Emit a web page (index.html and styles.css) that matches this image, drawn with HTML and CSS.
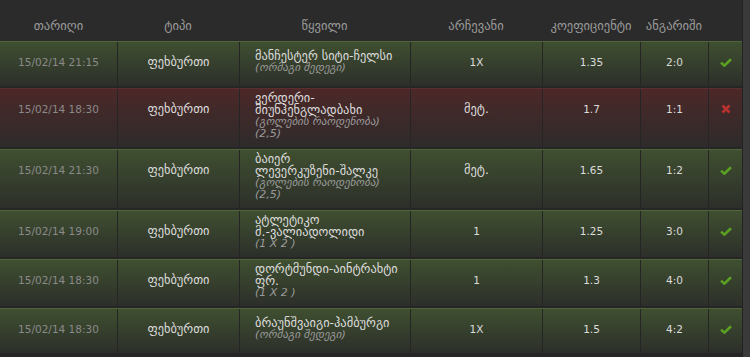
FILE: index.html
```html
<!DOCTYPE html>
<html lang="ka">
<head>
<meta charset="utf-8">
<title>ფსონები</title>
<link rel="stylesheet" href="styles.css">
</head>
<body>
<div class="page">
  <div class="table">
    <div class="row head">
      <div class="cell ka">თარიღი</div>
      <div class="cell ka">ტიპი</div>
      <div class="cell ka">წყვილი</div>
      <div class="cell ka">არჩევანი</div>
      <div class="cell ka">კოეფიციენტი</div>
      <div class="cell ka">ანგარიში</div>
      <div class="cell"></div>
    </div>

    <div class="row win">
      <div class="cell date">15/02/14 21:15</div>
      <div class="cell ka">ფეხბურთი</div>
      <div class="cell pair"><span class="ka">მანჩესტერ სიტი-ჩელსი</span><em>(ორმაგი შედეგი)</em></div>
      <div class="cell">1X</div>
      <div class="cell">1.35</div>
      <div class="cell">2:0</div>
      <div class="cell icon"><svg class="check" viewBox="0 0 12 9" width="12" height="9"><path d="M1 4.6 L4.4 7.6 L11 1.2"/></svg></div>
    </div>

    <div class="row lose">
      <div class="cell date">15/02/14 18:30</div>
      <div class="cell ka">ფეხბურთი</div>
      <div class="cell pair"><span class="ka">ვერდერი-<br>მიუნჰენგლადბახი</span><em>(გოლების რაოდენობა)<br>(2,5)</em></div>
      <div class="cell ka">მეტ.</div>
      <div class="cell">1.7</div>
      <div class="cell">1:1</div>
      <div class="cell icon"><svg class="cross" viewBox="0 0 10 10" width="10" height="10"><path d="M1.5 1.5 L8.5 8.5 M8.5 1.5 L1.5 8.5"/></svg></div>
    </div>

    <div class="row win">
      <div class="cell date">15/02/14 21:30</div>
      <div class="cell ka">ფეხბურთი</div>
      <div class="cell pair"><span class="ka">ბაიერ<br>ლევერკუზენი-შალკე</span><em>(გოლების რაოდენობა)<br>(2,5)</em></div>
      <div class="cell ka">მეტ.</div>
      <div class="cell">1.65</div>
      <div class="cell">1:2</div>
      <div class="cell icon"><svg class="check" viewBox="0 0 12 9" width="12" height="9"><path d="M1 4.6 L4.4 7.6 L11 1.2"/></svg></div>
    </div>

    <div class="row win">
      <div class="cell date">15/02/14 19:00</div>
      <div class="cell ka">ფეხბურთი</div>
      <div class="cell pair"><span class="ka">ატლეტიკო<br>მ.-ვალიადოლიდი</span><em>(1 X 2 )</em></div>
      <div class="cell">1</div>
      <div class="cell">1.25</div>
      <div class="cell">3:0</div>
      <div class="cell icon"><svg class="check" viewBox="0 0 12 9" width="12" height="9"><path d="M1 4.6 L4.4 7.6 L11 1.2"/></svg></div>
    </div>

    <div class="row win">
      <div class="cell date">15/02/14 18:30</div>
      <div class="cell ka">ფეხბურთი</div>
      <div class="cell pair"><span class="ka">დორტმუნდი-აინტრახტი<br>ფრ.</span><em>(1 X 2 )</em></div>
      <div class="cell">1</div>
      <div class="cell">1.3</div>
      <div class="cell">4:0</div>
      <div class="cell icon"><svg class="check" viewBox="0 0 12 9" width="12" height="9"><path d="M1 4.6 L4.4 7.6 L11 1.2"/></svg></div>
    </div>

    <div class="row win">
      <div class="cell date">15/02/14 18:30</div>
      <div class="cell ka">ფეხბურთი</div>
      <div class="cell pair"><span class="ka">ბრაუნშვაიგი-ჰამბურგი</span><em>(ორმაგი შედეგი)</em></div>
      <div class="cell">1X</div>
      <div class="cell">1.5</div>
      <div class="cell">4:2</div>
      <div class="cell icon"><svg class="check" viewBox="0 0 12 9" width="12" height="9"><path d="M1 4.6 L4.4 7.6 L11 1.2"/></svg></div>
    </div>
  </div>
  <div class="scrollbar"></div>
</div>
</body>
</html>
```

FILE: styles.css
```css
html, body {
  margin: 0;
  padding: 0;
  background: #2a2a2a;
  height: 100%;
}

body {
  font-family: "DejaVu Sans", sans-serif;
  font-size: 10.5px;
  line-height: 12px;
  color: #dcdcdc;
}

.ka {
  font-size: 12.4px;
}

.page {
  display: flex;
  height: 357px;
  overflow: hidden;
}

.table {
  width: 742px;
  flex: none;
  background: #262626;
}

.scrollbar {
  flex: 1;
  background: #3a3a3a;
  border-left: 1px solid #222;
}

.row {
  display: grid;
  grid-template-columns: 117px 122px 171px 132px 98px 68px 34px;
  min-height: 45px;
  margin-bottom: 2px;
  box-sizing: border-box;
}

.row.head {
  min-height: 41px;
  margin-bottom: 0;
  background: #2b2b2b;
  color: #9a9a9a;
}

.row.head .cell {
  padding-top: 20px;
  border-left: none;
  text-align: center;
  font-size: 12.6px;
}

.row.win {
  background: linear-gradient(#3f4f30, #2c2f2a);
  border-top: 1px solid #4f6539;
}

.row.lose {
  background: linear-gradient(#4c2828, #2e2b2b);
  border-top: 1px solid #5a2e2e;
}

.cell {
  padding: 14px 4px 4px;
  text-align: center;
  border-left: 1px solid #252525;
}

.cell:first-child {
  border-left: none;
}

.cell.date {
  color: #8a8a8a;
}

.cell.pair {
  text-align: left;
  align-self: stretch;
  padding: 3px 8px 7px 15px;
  display: flex;
  flex-direction: column;
  justify-content: center;
}

.cell.pair span,
.cell.pair em {
  display: block;
  line-height: 12px;
}

.cell.pair em {
  color: #9a9a9a;
  font-size: 11px;
}

.cell.icon {
  padding-top: 15px;
}

.check path {
  fill: none;
  stroke: #5ba121;
  stroke-width: 2.6;
  stroke-linecap: butt;
}

.cross path {
  fill: none;
  stroke: #b8302f;
  stroke-width: 2.6;
}
```
